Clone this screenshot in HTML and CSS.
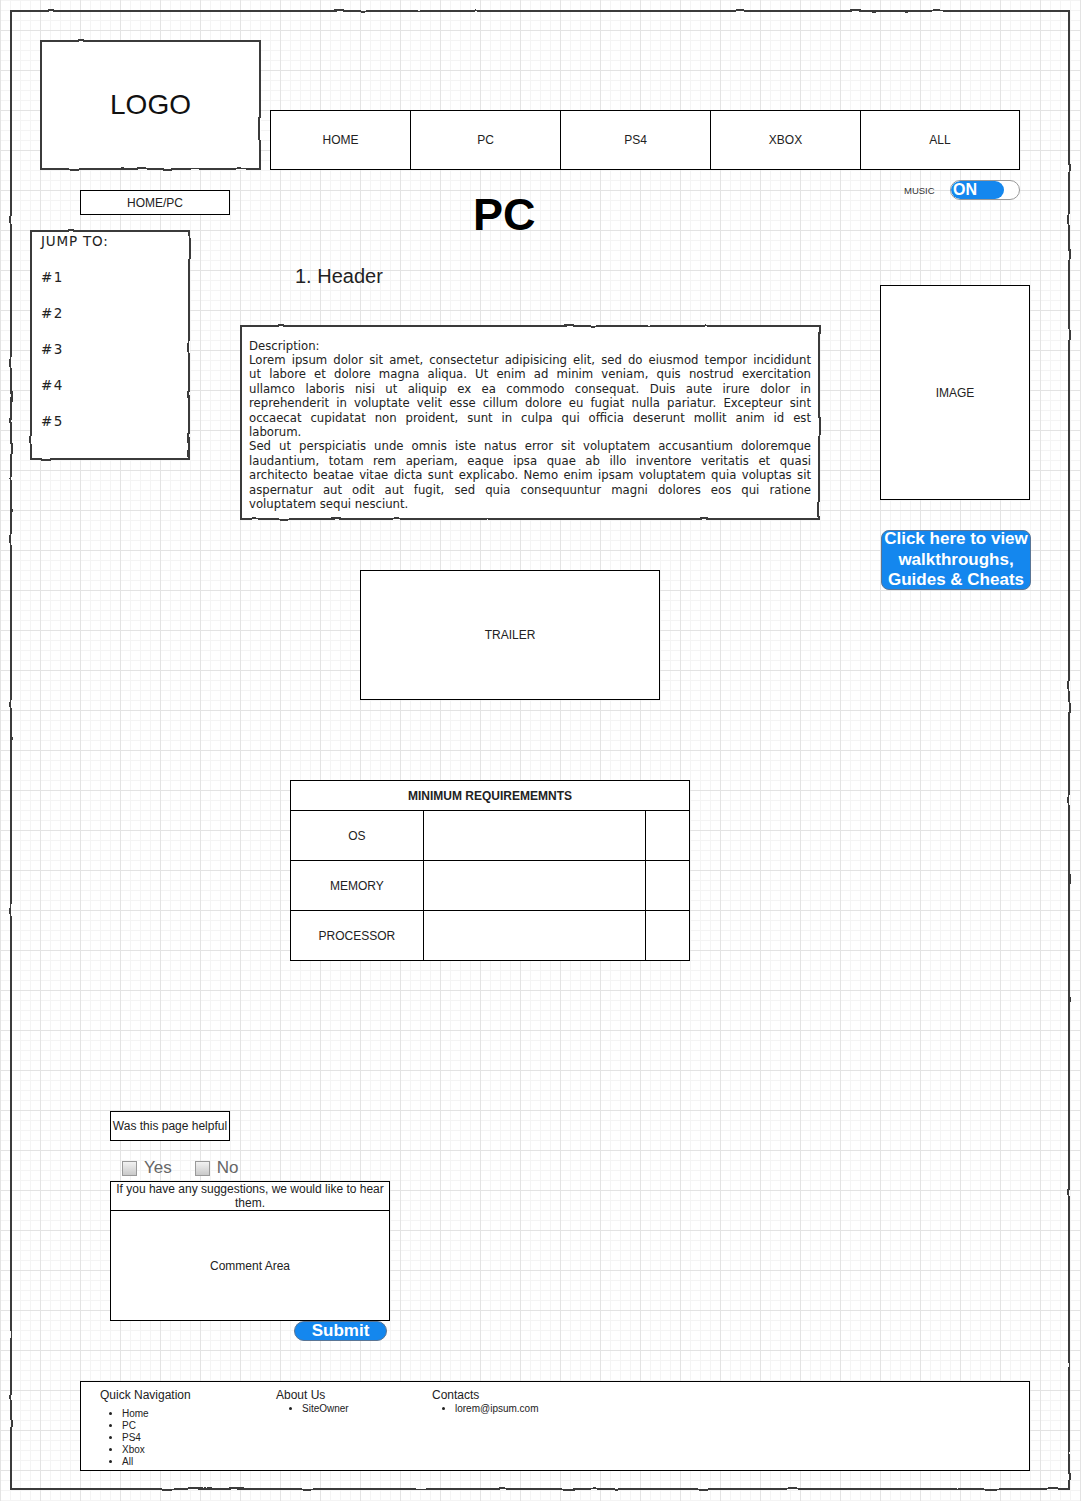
FILE: index.html
```html
<!DOCTYPE html>
<html lang="en">
<head>
<meta charset="utf-8">
<title>PC</title>
<link rel="stylesheet" href="styles.css">
</head>
<body>
<div class="frame sketch">
  <header class="top">
    <div class="logo sketch">LOGO</div>
    <nav class="nav">
      <a class="nav-item nav-home">HOME</a>
      <a class="nav-item nav-mid">PC</a>
      <a class="nav-item nav-mid">PS4</a>
      <a class="nav-item nav-mid">XBOX</a>
      <a class="nav-item nav-all">ALL</a>
    </nav>
  </header>

  <div class="main">
    <aside class="left">
      <div class="crumb">HOME/PC</div>
      <div class="jump sketch">
        <div class="jump-title">JUMP TO:</div>
        <div class="jump-item">#1</div>
        <div class="jump-item">#2</div>
        <div class="jump-item">#3</div>
        <div class="jump-item">#4</div>
        <div class="jump-item">#5</div>
      </div>
    </aside>

    <section class="center">
      <h1 class="title">PC</h1>
      <h2 class="subhead">1. Header</h2>
      <div class="desc sketch">
        <div class="desc-text">
          <span class="ln">Description:</span>
          <span class="ln j">Lorem ipsum dolor sit amet, consectetur adipisicing elit, sed do eiusmod tempor incididunt</span>
          <span class="ln j">ut labore et dolore magna aliqua. Ut enim ad minim veniam, quis nostrud exercitation</span>
          <span class="ln j">ullamco laboris nisi ut aliquip ex ea commodo consequat. Duis aute irure dolor in</span>
          <span class="ln j">reprehenderit in voluptate velit esse cillum dolore eu fugiat nulla pariatur. Excepteur sint</span>
          <span class="ln j">occaecat cupidatat non proident, sunt in culpa qui officia deserunt mollit anim id est</span>
          <span class="ln">laborum.</span>
          <span class="ln j">Sed ut perspiciatis unde omnis iste natus error sit voluptatem accusantium doloremque</span>
          <span class="ln j">laudantium, totam rem aperiam, eaque ipsa quae ab illo inventore veritatis et quasi</span>
          <span class="ln j">architecto beatae vitae dicta sunt explicabo. Nemo enim ipsam voluptatem quia voluptas sit</span>
          <span class="ln j">aspernatur aut odit aut fugit, sed quia consequuntur magni dolores eos qui ratione</span>
          <span class="ln">voluptatem sequi nesciunt.</span>
        </div>
      </div>
      <div class="trailer">TRAILER</div>
      <table class="req">
        <thead>
          <tr><th colspan="3">MINIMUM REQUIREMEMNTS</th></tr>
        </thead>
        <tbody>
          <tr><td class="c1">OS</td><td class="c2"></td><td class="c3"></td></tr>
          <tr><td class="c1">MEMORY</td><td class="c2"></td><td class="c3"></td></tr>
          <tr><td class="c1">PROCESSOR</td><td class="c2"></td><td class="c3"></td></tr>
        </tbody>
      </table>
    </section>

    <aside class="right">
      <div class="music">
        <span class="music-label">MUSIC</span>
        <span class="toggle"><span class="toggle-on">ON</span></span>
      </div>
      <div class="image">IMAGE</div>
      <a class="guide-btn">Click here to view walkthroughs, Guides &amp; Cheats</a>
    </aside>
  </div>

  <section class="feedback">
    <div class="helpful">Was this page helpful</div>
    <div class="checks">
      <span class="check"><span class="box"></span>Yes</span>
      <span class="check"><span class="box"></span>No</span>
    </div>
    <div class="suggest">
      <div class="suggest-head">If you have any suggestions, we would like to hear them.</div>
      <div class="comment">Comment Area</div>
    </div>
    <a class="submit">Submit</a>
  </section>

  <footer class="footer">
    <div class="fcol fcol-nav">
      <div class="fhead">Quick Navigation</div>
      <ul class="flist">
        <li>Home</li>
        <li>PC</li>
        <li>PS4</li>
        <li>Xbox</li>
        <li>All</li>
      </ul>
    </div>
    <div class="fcol fcol-about">
      <div class="fhead">About Us</div>
      <ul class="flist">
        <li>SiteOwner</li>
      </ul>
    </div>
    <div class="fcol fcol-contact">
      <div class="fhead">Contacts</div>
      <ul class="flist">
        <li>lorem@ipsum.com</li>
      </ul>
    </div>
  </footer>
</div>

<svg class="defs" width="0" height="0" aria-hidden="true">
  <filter id="rough" x="-1%" y="-1%" width="102%" height="102%">
    <feTurbulence type="fractalNoise" baseFrequency="0.035" numOctaves="2" seed="7" result="n"/>
    <feDisplacementMap in="SourceGraphic" in2="n" scale="2.5" xChannelSelector="R" yChannelSelector="G"/>
  </filter>
</svg>
</body>
</html>
```

FILE: styles.css
```css
* { box-sizing: border-box; }

html, body {
  margin: 0;
  padding: 0;
}

body {
  min-height: 1501px;
  background-color: #ffffff;
  background-image:
    linear-gradient(#e3e3e3 1px, transparent 1px),
    linear-gradient(90deg, #e3e3e3 1px, transparent 1px),
    linear-gradient(#f4f4f4 1px, transparent 1px),
    linear-gradient(90deg, #f4f4f4 1px, transparent 1px);
  background-size: 40px 40px, 40px 40px, 10px 10px, 10px 10px;
  background-position: 0 30px, 0 0, 0 0, 0 0;
  font-family: "Liberation Sans", Arial, sans-serif;
  color: #222;
}

.defs { display: block; width: 0; height: 0; }

/* sketchy hand-drawn border */
.sketch { position: relative; }
.sketch::before {
  content: "";
  position: absolute;
  inset: 0;
  border: 2px solid #3a3a3a;
  filter: url(#rough);
  pointer-events: none;
}

.frame {
  margin: 10px 0 0 10px;
  width: 1060px;
  height: 1480px;
}

/* header */
.top {
  display: flex;
  padding: 30px 0 0 30px;
}
.logo {
  width: 221px;
  height: 130px;
  background: #fff;
  display: flex;
  align-items: center;
  justify-content: center;
  font-size: 28px;
  color: #111;
}
.nav {
  display: flex;
  align-self: flex-end;
  margin-left: 9px;
  width: 750px;
  height: 60px;
  border: 1px solid #000;
  background: #fff;
}
.nav-item {
  display: flex;
  align-items: center;
  justify-content: center;
  font-size: 12px;
  color: #222;
  border-left: 1px solid #000;
  width: 150px;
}
.nav-home { border-left: 0; width: 139px; }
.nav-all { width: 159px; }

/* main 3-column area */
.main {
  display: grid;
  grid-template-columns: 230px 580px 250px;
  align-items: start;
}

.left { display: flex; flex-direction: column; }
.crumb {
  margin: 20px 0 0 70px;
  width: 150px;
  height: 25px;
  border: 1px solid #000;
  background: #fff;
  font-size: 12px;
  display: flex;
  align-items: center;
  justify-content: center;
}
.jump {
  margin: 15px 0 0 20px;
  width: 160px;
  height: 230px;
  background: #fff;
  padding: 2px 0 0 11px;
  font-family: "DejaVu Sans", Verdana, sans-serif;
  color: #222;
}
.jump-title {
  font-size: 13.5px;
  line-height: 18px;
  letter-spacing: 0.8px;
}
.jump-item {
  font-size: 13.5px;
  line-height: 18px;
  margin-top: 18px;
  letter-spacing: 1.5px;
}

.center { display: flex; flex-direction: column; align-items: flex-start; }
.title {
  margin: 20px 0 0 233px;
  font-size: 45px;
  line-height: 50px;
  font-weight: bold;
  color: #000;
}
.subhead {
  margin: 24px 0 0 55px;
  font-size: 20px;
  line-height: 24px;
  font-weight: normal;
  color: #222;
}
.desc {
  margin-top: 37px;
  width: 580px;
  height: 195px;
  background: #fff;
  padding: 0 9px;
  display: flex;
  align-items: center;
}
.desc-text {
  width: 100%;
  font-family: "DejaVu Sans", Verdana, sans-serif;
  font-size: 11.7px;
  line-height: 14.4px;
  color: #222;
  padding-top: 5px;
}
.ln { display: block; white-space: nowrap; }
.ln.j { text-align: justify; text-align-last: justify; white-space: normal; }

.trailer {
  margin: 50px 0 0 120px;
  width: 300px;
  height: 130px;
  border: 1px solid #000;
  background: #fff;
  font-size: 12px;
  display: flex;
  align-items: center;
  justify-content: center;
}

.req {
  margin: 80px 0 0 50px;
  width: 400px;
  border-collapse: collapse;
  background: #fff;
  font-size: 12px;
  color: #222;
}
.req th {
  height: 30px;
  border: 1px solid #000;
  font-weight: bold;
  padding: 0;
}
.req td {
  height: 50px;
  border: 1px solid #000;
  padding: 0;
  text-align: center;
}
.req .c1 { width: 133px; }
.req .c2 { width: 223px; }
.req .c3 { width: 44px; }

.right { display: flex; flex-direction: column; align-items: flex-start; }
.music {
  display: flex;
  align-items: center;
  margin: 10px 0 0 84px;
  height: 20px;
}
.music-label {
  font-size: 9.5px;
  color: #333;
  width: 46px;
}
.toggle {
  display: block;
  width: 70px;
  height: 20px;
  border: 1px solid #999;
  border-radius: 10px;
  background: #fff;
  overflow: hidden;
}
.toggle-on {
  display: block;
  width: 53px;
  height: 18px;
  border-radius: 9px;
  background: #1487ee;
  color: #fff;
  font-weight: bold;
  font-size: 16px;
  line-height: 17px;
  padding-left: 2px;
}
.image {
  margin: 85px 0 0 60px;
  width: 150px;
  height: 215px;
  border: 1px solid #000;
  background: #fff;
  font-size: 12px;
  display: flex;
  align-items: center;
  justify-content: center;
}
.guide-btn {
  margin: 30px 0 0 61px;
  width: 150px;
  height: 60px;
  border: 1px solid #5a7595;
  border-radius: 8px;
  background: #1487ee;
  color: #fff;
  font-weight: bold;
  font-size: 17px;
  line-height: 20.5px;
  text-align: center;
  display: flex;
  align-items: center;
  justify-content: center;
}

/* feedback */
.feedback {
  margin: 150px 0 0 100px;
  display: flex;
  flex-direction: column;
  align-items: flex-start;
}
.helpful {
  width: 120px;
  height: 30px;
  border: 1px solid #000;
  background: #fff;
  font-size: 12px;
  display: flex;
  align-items: center;
  justify-content: center;
  white-space: nowrap;
}
.checks {
  display: flex;
  margin: 18px 0 0 12px;
  height: 18px;
  align-items: center;
}
.check {
  display: flex;
  align-items: center;
  font-size: 17px;
  color: #666;
  margin-right: 23px;
}
.box {
  display: block;
  width: 15px;
  height: 15px;
  border: 1px solid #999;
  background: linear-gradient(#f2f2f2, #c9c9c9);
  margin-right: 7px;
}
.suggest {
  margin-top: 4px;
  width: 280px;
  border: 1px solid #000;
  background: #fff;
}
.suggest-head {
  height: 29px;
  border-bottom: 1px solid #000;
  font-size: 12px;
  line-height: 14px;
  text-align: center;
  padding: 0 4px;
}
.comment {
  height: 109px;
  font-size: 12px;
  display: flex;
  align-items: center;
  justify-content: center;
}
.submit {
  margin-left: 184px;
  width: 93px;
  height: 20px;
  border: 1px solid #5a7595;
  border-radius: 10px;
  background: #1487ee;
  color: #fff;
  font-weight: bold;
  font-size: 17px;
  line-height: 18px;
  text-align: center;
}

/* footer */
.footer {
  margin: 40px 0 0 70px;
  width: 950px;
  height: 90px;
  border: 1px solid #000;
  background: #fff;
  display: flex;
  color: #222;
}
.fcol { padding-top: 7px; }
.fhead { font-size: 12px; line-height: 13px; }
.flist {
  margin: 0;
  font-size: 10px;
  line-height: 12px;
}
.fcol-nav { margin-left: 19px; width: 176px; }
.fcol-nav .flist { padding-left: 22px; margin-top: 6px; }
.fcol-about { width: 156px; }
.fcol-about .flist { padding-left: 26px; margin-top: 1px; }
.fcol-contact .flist { padding-left: 23px; margin-top: 1px; }
```
